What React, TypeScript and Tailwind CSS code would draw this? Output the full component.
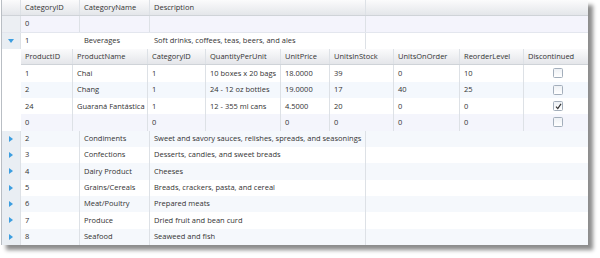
import React from "react";

const categories = [
  { id: "2", name: "Condiments", desc: "Sweet and savory sauces, relishes, spreads, and seasonings" },
  { id: "3", name: "Confections", desc: "Desserts, candies, and sweet breads" },
  { id: "4", name: "Dairy Product", desc: "Cheeses" },
  { id: "5", name: "Grains/Cereals", desc: "Breads, crackers, pasta, and cereal" },
  { id: "6", name: "Meat/Poultry", desc: "Prepared meats" },
  { id: "7", name: "Produce", desc: "Dried fruit and bean curd" },
  { id: "8", name: "Seafood", desc: "Seaweed and fish" },
];

const products = [
  { id: "1", name: "Chai", cat: "1", qty: "10 boxes x 20 bags", price: "18.0000", stock: "39", order: "0", level: "10", disc: false },
  { id: "2", name: "Chang", cat: "1", qty: "24 - 12 oz bottles", price: "19.0000", stock: "17", order: "40", level: "25", disc: false },
  { id: "24", name: "Guaraná Fantástica", cat: "1", qty: "12 - 355 ml cans", price: "4.5000", stock: "20", order: "0", level: "0", disc: true },
];

const childCols = [
  { label: "ProductID", w: "w-[52px]" },
  { label: "ProductName", w: "w-[75px]" },
  { label: "CategoryID", w: "w-[58px]" },
  { label: "QuantityPerUnit", w: "w-[75px]" },
  { label: "UnitPrice", w: "w-[49px]" },
  { label: "UnitsInStock", w: "w-[64px]" },
  { label: "UnitsOnOrder", w: "w-[66px]" },
  { label: "ReorderLevel", w: "w-[64px]" },
];

const row = "flex h-[16.33px] items-center";
const cell = "h-full flex items-center pl-[4px] border-r border-[#dde1e6] whitespace-nowrap overflow-hidden";
const head = "bg-gradient-to-b from-[#fbfbfc] to-[#e4e6ea] border-b border-[#cfd3d8]";

function CheckBox({ checked }: { checked: boolean }) {
  return (
    <div className="w-[10px] h-[10px] rounded-[1.5px] border border-[#a3aebb] bg-gradient-to-b from-[#eef1f5] to-white flex items-center justify-center">
      {checked && (
        <svg width="7" height="7" viewBox="0 0 7 7">
          <path d="M1 3.6 L2.8 5.6 L6 0.8" fill="none" stroke="#333" strokeWidth="1.2" />
        </svg>
      )}
    </div>
  );
}

function Arrow({ open }: { open?: boolean }) {
  return open ? (
    <svg width="6" height="4" viewBox="0 0 6 4">
      <path d="M0 0 H6 L3 4 Z" fill="#3c9ee0" />
    </svg>
  ) : (
    <svg width="4" height="6" viewBox="0 0 4 6">
      <path d="M0 0 L4 3 L0 6 Z" fill="#3c9ee0" />
    </svg>
  );
}

export default function App() {
  return (
    <div className="w-[600px] h-[258px] bg-white pl-[1px] font-['Open_Sans',sans-serif] text-[7.5px] text-[#333]">
      <div className="w-[587px] h-[245px] bg-white border-l border-[#b9bec4] shadow-[5px_5px_4px_rgba(0,0,0,0.45)] overflow-hidden">
        {/* master header */}
        <div className={`${row} ${head}`}>
          <div className={`${cell} w-[19px]`} />
          <div className={`${cell} w-[59px]`}>CategoryID</div>
          <div className={`${cell} w-[70px]`}>CategoryName</div>
          <div className={`${cell} w-[216px]`}>Description</div>
          <div className="flex-1" />
        </div>

        {/* new row */}
        <div className={`${row} bg-[#f4f4fc] border-b border-[#e3e6ee]`}>
          <div className={`${cell} w-[19px] bg-[#eceff3]`} />
          <div className={`${cell} w-[59px]`}>0</div>
          <div className={`${cell} w-[70px]`} />
          <div className={`${cell} w-[216px]`} />
          <div className="flex-1" />
        </div>

        {/* expanded row */}
        <div className={row}>
          <div className={`${cell} w-[19px] bg-[#e9eef3] pl-[6px]`}>
            <Arrow open />
          </div>
          <div className={`${cell} w-[59px] border-r-0`}>1</div>
          <div className={`${cell} w-[70px] border-r-0`}>Beverages</div>
          <div className={`${cell} w-[216px]`}>Soft drinks, coffees, teas, beers, and ales</div>
          <div className="flex-1" />
        </div>

        {/* child grid */}
        <div className="flex">
          <div className="w-[19px]" />
          <div className="flex-1">
            <div className={`${row} ${head}`}>
              {childCols.map((c) => (
                <div key={c.label} className={`${cell} ${c.w}`}>
                  {c.label}
                </div>
              ))}
              <div className={`${cell} flex-1 border-r-0`}>Discontinued</div>
            </div>
            {products.map((p, i) => (
              <div key={p.id} className={`${row} ${i % 2 === 1 ? "bg-[#f4f8fd]" : "bg-white"}`}>
                <div className={`${cell} w-[52px]`}>{p.id}</div>
                <div className={`${cell} w-[75px]`}>{p.name}</div>
                <div className={`${cell} w-[58px]`}>{p.cat}</div>
                <div className={`${cell} w-[75px]`}>{p.qty}</div>
                <div className={`${cell} w-[49px]`}>{p.price}</div>
                <div className={`${cell} w-[64px]`}>{p.stock}</div>
                <div className={`${cell} w-[66px]`}>{p.order}</div>
                <div className={`${cell} w-[64px]`}>{p.level}</div>
                <div className={`${cell} flex-1 border-r-0 justify-center pl-0`}>
                  <CheckBox checked={p.disc} />
                </div>
              </div>
            ))}
            <div className={`${row} bg-[#f4f5fc]`}>
              <div className={`${cell} w-[52px]`}>0</div>
              <div className={`${cell} w-[75px]`} />
              <div className={`${cell} w-[58px]`}>0</div>
              <div className={`${cell} w-[75px]`} />
              <div className={`${cell} w-[49px]`}>0</div>
              <div className={`${cell} w-[64px]`}>0</div>
              <div className={`${cell} w-[66px]`}>0</div>
              <div className={`${cell} w-[64px]`}>0</div>
              <div className={`${cell} flex-1 border-r-0 justify-center pl-0`}>
                <CheckBox checked={false} />
              </div>
            </div>
          </div>
        </div>

        {/* collapsed rows */}
        {categories.map((c, i) => (
          <div key={c.id} className={`${row} ${i % 2 === 0 ? "bg-[#f5f8fc]" : "bg-white"}`}>
            <div className={`${cell} w-[19px] bg-[#e9eef3] pl-[7px]`}>
              <Arrow />
            </div>
            <div className={`${cell} w-[59px]`}>{c.id}</div>
            <div className={`${cell} w-[70px]`}>{c.name}</div>
            <div className={`${cell} w-[216px]`}>{c.desc}</div>
            <div className="flex-1" />
          </div>
        ))}
      </div>
    </div>
  );
}
